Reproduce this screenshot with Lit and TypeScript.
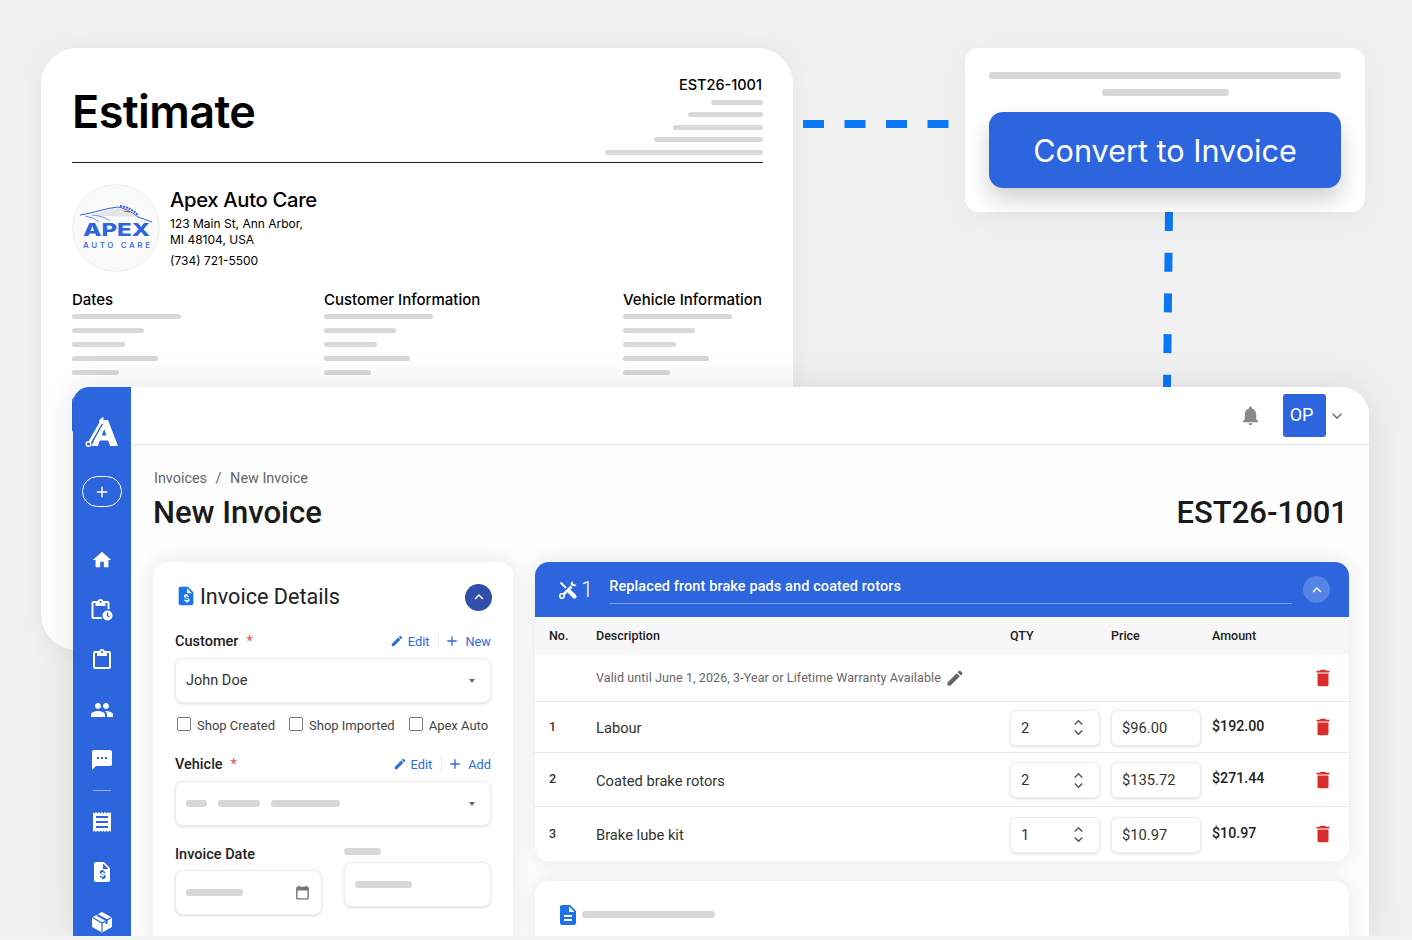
import { LitElement, html, css } from 'lit';
import { customElement } from 'lit/decorators.js';

const icon = (d: string, size = 24, cls = '') => html`
    <svg class=${cls} width=${size} height=${size} viewBox="0 0 24 24" fill="currentColor"><path d=${d}></path></svg>
`;

const ICONS = {
    home: 'M10 20v-6h4v6h5v-8h3L12 3 2 12h3v8z',
    clipboard: 'M19 3h-4.180C14.400 1.840 13.300 1 12 1s-2.400.84-2.820 2H5c-1.100 0-2 .9-2 2v14c0 1.100.9 2 2 2h14c1.100 0 2-.9 2-2V5c0-1.100-.9-2-2-2zm-7 0c.55 0 1 .45 1 1s-.45 1-1 1-1-.45-1-1 .45-1 1-1zm7 16H5V5h2v3h10V5h2v14z',
    people: 'M16 11c1.660 0 2.990-1.340 2.990-3S17.660 5 16 5s-3 1.340-3 3 1.340 3 3 3zm-8 0c1.660 0 2.990-1.340 2.990-3S9.660 5 8 5 5 6.340 5 8s1.340 3 3 3zm0 2c-2.330 0-7 1.170-7 3.500V19h14v-2.500C15 14.170 10.330 13 8 13zm8 0c-.29 0-.62.02-.97.05 1.160.84 1.970 1.970 1.970 3.450V19h6v-2.500c0-2.330-4.670-3.500-7-3.500z',
    chat: 'M20 2H4c-1.100 0-2 .9-2 2v18l4-4h14c1.100 0 2-.9 2-2V4c0-1.100-.9-2-2-2zM9 11H7V9h2v2zm4 0h-2V9h2v2zm4 0h-2V9h2v2z',
    receipt: 'M3 22V2l1.500 1.500L6 2l1.500 1.500L9 2l1.500 1.500L12 2l1.500 1.500L15 2l1.500 1.500L18 2l1.500 1.500L21 2v20l-1.500-1.500L18 22l-1.500-1.500L15 22l-1.500-1.500L12 22l-1.500-1.500L9 22l-1.500-1.500L6 22l-1.500-1.500zM6 8h12V6H6zm0 5h12v-2H6zm0 5h12v-2H6z',
    invoice: 'M14 2H6c-1.100 0-2 .9-2 2v16c0 1.100.9 2 2 2h12c1.100 0 2-.9 2-2V8l-6-6zm-1 7V3.500L18.500 9H13zm-1 10v-1.200c-1.200-.2-2.200-.9-2.400-2.100h1.600c.1.6.6 1 1.600 1 1 0 1.400-.4 1.400-.9 0-.5-.3-.9-1.800-1.200-1.700-.4-2.700-1-2.700-2.300 0-1.100.9-1.900 2.200-2.100V9.900h1.600v1.300c1.200.2 1.900 1.100 2 2.100h-1.600c-.1-.6-.5-1-1.300-1-.9 0-1.300.4-1.300.9 0 .5.4.8 1.800 1.100 1.500.4 2.700 1 2.700 2.400 0 1.100-.9 1.900-2.200 2.100V19z',
    pencil: 'M3 17.250V21h3.750L17.810 9.940l-3.750-3.750L3 17.250zM20.710 7.040a1 1 0 0 0 0-1.410l-2.340-2.340a1 1 0 0 0-1.410 0l-1.830 1.830 3.750 3.750 1.830-1.830z',
    plus: 'M19 13h-6v6h-2v-6H5v-2h6V5h2v6h6v2z',
    chevUp: 'M7.410 15.410 12 10.830l4.590 4.580L18 14l-6-6-6 6z',
    chevDown: 'M7.410 8.590 12 13.170l4.590-4.580L18 10l-6 6-6-6z',
    trash: 'M6 19c0 1.100.9 2 2 2h8c1.100 0 2-.9 2-2V7H6v12zM19 4h-3.500l-1-1h-5l-1 1H5v2h14V4z',
    bell: 'M12 22c1.100 0 2-.9 2-2h-4c0 1.100.9 2 2 2zm6-6v-5c0-3.070-1.630-5.640-4.500-6.320V4c0-.83-.67-1.500-1.500-1.500s-1.500.67-1.500 1.500v.68C7.640 5.360 6 7.920 6 11v5l-2 2v1h16v-1l-2-2z',
    calendar: 'M19 4h-1V2h-2v2H8V2H6v2H5c-1.100 0-2 .9-2 2v14c0 1.100.9 2 2 2h14c1.100 0 2-.9 2-2V6c0-1.100-.9-2-2-2zm0 16H5V9h14v11z',
    doc: 'M14 2H6c-1.100 0-2 .9-2 2v16c0 1.100.9 2 2 2h12c1.100 0 2-.9 2-2V8l-6-6zm2 16H8v-2h8v2zm0-4H8v-2h8v2zm-3-5V3.500L18.500 9H13z'
};

@customElement('app-root')
export class AppRoot extends LitElement {

    static styles = css`
        :host {
            background: #f2f2f2;
            display: block;
            font-family: Roboto, "Liberation Sans", sans-serif;
            height: 940px;
            overflow: hidden;
            width: 1412px;
        }

        .stage {
            background: #f1f1f1;
            height: 936px;
            overflow: hidden;
            position: relative;
        }

        .bar {
            background: #d8d8d8;
            border-radius: 3px;
            display: block;
            height: 5px;
        }

        /* estimate sheet */
        .estimate {
            background: #fff;
            border-radius: 36px;
            box-shadow: 0 0 30px rgba(0, 0, 0, .05);
            box-sizing: border-box;
            color: #000;
            font-family: Inter, "Liberation Sans", sans-serif;
            height: 602px;
            left: 41px;
            padding: 30px 30px 0 31px;
            position: absolute;
            top: 48px;
            width: 752px;
        }

        .est-head {
            align-items: flex-start;
            border-bottom: 1px solid #222;
            display: flex;
            height: 84px;
            justify-content: space-between;
        }

        .est-head h1 {
            font-size: 45px;
            font-weight: 600;
            letter-spacing: -.6px;
            line-height: 1;
            margin: 11px 0 0;
        }

        .est-no {
            align-items: flex-end;
            display: flex;
            flex-direction: column;
            font-size: 14.500px;
            font-weight: 500;
            gap: 7.500px;
        }

        .est-no span:first-child {
            line-height: 14px;
            margin-right: 1px;
        }

        .shop {
            display: flex;
            gap: 10px;
            margin-top: 21px;
        }

        .logo {
            align-items: center;
            background: #fafafa;
            border: 1px solid #eee;
            border-radius: 50%;
            box-sizing: border-box;
            display: flex;
            height: 88px;
            justify-content: center;
            width: 88px;
        }

        .shop h2 {
            font-size: 20.200px;
            font-weight: 500;
            letter-spacing: -.3px;
            line-height: 24px;
            margin: 4px 0 4px;
        }

        .shop p {
            font-size: 12px;
            line-height: 15.500px;
            margin: 0 0 6px;
        }

        .est-cols {
            display: grid;
            grid-template-columns: 252px 299px 1fr;
            margin-top: 16px;
        }

        .est-cols h3 {
            font-size: 15px;
            font-weight: 500;
            line-height: 18px;
            margin: 0 0 5px;
        }

        .lines {
            display: flex;
            flex-direction: column;
            gap: 9px;
        }

        /* dashes between the windows */
        .dash {
            display: block;
            position: absolute;
        }

        /* convert popup */
        .convert {
            background: #fff;
            border-radius: 14px;
            box-shadow: 0 6px 30px rgba(0, 0, 0, .05);
            box-sizing: border-box;
            height: 164px;
            left: 965px;
            padding: 24px;
            position: absolute;
            top: 48px;
            width: 400px;
        }

        .convert .bar {
            height: 7px;
        }

        .convert .short {
            margin: 10px auto 0;
            width: 127px;
        }

        .convert button {
            background: #2d65df;
            border: 0;
            border-radius: 14px;
            box-shadow: 0 12px 22px rgba(0, 0, 0, .18);
            color: #fff;
            display: block;
            font-family: Inter, "Liberation Sans", sans-serif;
            font-size: 30.600px;
            height: 76px;
            margin-top: 16px;
            padding: 0;
            width: 100%;
        }

        /* application window */
        .app {
            background: #fdfdfd;
            border-radius: 16px 28px 0 0;
            box-shadow: 0 0 40px rgba(0, 0, 0, .1);
            display: flex;
            height: 549px;
            left: 73px;
            overflow: hidden;
            position: absolute;
            top: 387px;
            width: 1296px;
        }

        .lobe {
            background: #2d65df;
            border-radius: 4px 0 0 4px;
            height: 36px;
            left: 72px;
            position: absolute;
            top: 397px;
            width: 4px;
        }

        .side {
            align-items: center;
            background: #2d65df;
            color: #fff;
            display: flex;
            flex: 0 0 58px;
            flex-direction: column;
        }

        .side .mark {
            margin-top: 30px;
        }

        .side .add {
            align-items: center;
            border: 1.500px solid #fff;
            border-radius: 16px;
            box-sizing: border-box;
            display: flex;
            height: 31px;
            justify-content: center;
            margin-top: 29px;
            width: 40px;
        }

        .nav {
            align-items: center;
            display: flex;
            flex-direction: column;
            gap: 26px;
            margin-top: 41px;
        }

        .nav svg {
            display: block;
        }

        .nav .home {
            margin: 1px 0;
        }

        .nav hr {
            background: #8fafee;
            border: 0;
            height: 1px;
            margin: -8px 0 -7px;
            width: 18px;
        }

        .main {
            display: flex;
            flex: 1;
            flex-direction: column;
            min-width: 0;
        }

        .top {
            align-items: center;
            background: #fff;
            border-bottom: 1px solid #e4e4ec;
            box-sizing: border-box;
            display: flex;
            flex: 0 0 58px;
            justify-content: flex-end;
            padding-right: 22px;
        }

        .top .bell {
            color: #8a8a8a;
            margin-right: 21px;
        }

        .top .avatar {
            align-items: center;
            background: #2d65df;
            border-radius: 3px;
            box-sizing: border-box;
            color: #fff;
            display: flex;
            font-size: 18px;
            height: 43px;
            justify-content: center;
            padding: 0 6px 2px 0;
            width: 43px;
        }

        .top .caret {
            color: #777;
            margin-left: 1px;
        }

        .content {
            padding: 25px 21px 0 22px;
        }

        .crumbs {
            color: #666;
            font-size: 14.400px;
            line-height: 17px;
            margin-left: 1px;
        }

        .crumbs i {
            font-style: normal;
            margin: 0 5px;
        }

        .title {
            align-items: center;
            color: #1a1a1a;
            display: flex;
            font-size: 31px;
            font-weight: 500;
            justify-content: space-between;
            line-height: 36px;
            margin-top: 8px;
        }

        .columns {
            display: grid;
            gap: 22px;
            grid-template-columns: 360px 814px;
            margin-top: 31px;
        }

        .card {
            background: #fff;
            border-radius: 14px;
            box-shadow: 0 0 22px rgba(0, 0, 0, .09);
        }

        /* invoice details */
        .details {
            box-sizing: border-box;
            height: 420px;
            padding: 21px 22px 0;
        }

        .details-head {
            align-items: center;
            display: flex;
            height: 26px;
        }

        .details-head > svg {
            color: #1a73e8;
        }

        .details-head h2 {
            color: #222;
            flex: 1;
            font-size: 21.600px;
            font-weight: 400;
            margin: 0 0 0 3px;
        }

        .round {
            align-items: center;
            background: #2f4fa8;
            border-radius: 50%;
            color: #fff;
            display: flex;
            height: 27px;
            justify-content: center;
            margin: 2px -1px 0 0;
            width: 27px;
        }

        .label-row {
            align-items: center;
            color: #222;
            display: flex;
            font-size: 14.500px;
            font-weight: 500;
            height: 20px;
        }

        .label-row b {
            color: #ef4b4b;
            font-weight: 400;
            margin-left: 8px;
        }

        .acts {
            align-items: center;
            color: #2d6ae0;
            display: flex;
            font-size: 12.800px;
            font-weight: 400;
            margin-left: auto;
        }

        .acts svg {
            margin-right: 4px;
        }

        .acts svg + span + .sep + svg {
            margin-right: 5px;
        }

        .acts .sep {
            background: #eee;
            height: 16px;
            margin: 0 5px 0 9px;
            width: 1px;
        }

        .field {
            align-items: center;
            background: #fff;
            border: 1px solid #eee;
            border-radius: 8px;
            box-shadow: 0 1px 3px rgba(0, 0, 0, .13);
            box-sizing: border-box;
            color: #333;
            display: flex;
            font-size: 14.500px;
            gap: 11px;
            height: 45px;
            padding: 0 10px;
        }

        .field .arrow {
            border-left: 3.500px solid transparent;
            border-right: 3.500px solid transparent;
            border-top: 4px solid #666;
            margin-left: auto;
            margin-right: 5px;
        }

        .checks {
            color: #444;
            display: flex;
            font-size: 13px;
            height: 20px;
            margin: 12px 0 19px 2px;
        }

        .checks label {
            align-items: center;
            display: flex;
            gap: 6px;
            margin-right: 14px;
        }

        .checks label:last-child {
            margin-right: 0;
        }

        .checks i {
            border: 1.500px solid #777;
            border-radius: 2px;
            box-sizing: border-box;
            height: 14px;
            margin-top: -2px;
            width: 14px;
        }

        .date-row {
            align-items: end;
            display: grid;
            gap: 22px;
            grid-template-columns: 147px 147px;
            margin-top: 18px;
        }

        .date-row .label-row {
            margin-bottom: 6px;
        }

        .date-row .right {
            margin-bottom: 8px;
        }

        .date-row .cap {
            margin-bottom: 7px;
            width: 37px;
        }

        .date-row svg {
            color: #777;
            margin-left: auto;
        }

        /* line items */
        .items {
            overflow: hidden;
        }

        .items-head {
            align-items: center;
            background: #2d65df;
            color: #fff;
            display: flex;
            height: 55px;
            padding: 0 19px 0 23px;
        }

        .items-head .no {
            font-size: 22px;
            font-weight: 300;
            margin: 0 0 0 3px;
        }

        .items-head .name {
            border-bottom: 1px solid #7fa3ee;
            flex: 1;
            font-size: 14.500px;
            font-weight: 500;
            letter-spacing: .1px;
            line-height: 16px;
            margin: 0 11px 0 16px;
            padding: 3px 0 8px;
        }

        .round.light {
            background: #5583e6;
            margin: 0;
        }

        .row {
            align-items: center;
            border-bottom: 1px solid #e8e8e8;
            box-sizing: border-box;
            color: #333;
            display: grid;
            font-size: 14.700px;
            grid-template-columns: 47px 414px 101px 101px 101px 1fr;
            padding-left: 14px;
        }

        .row:last-child {
            border-bottom: 0;
        }

        .row.head {
            background: #f7f7f7;
            border-bottom: 0;
            color: #222;
            font-size: 12.500px;
            font-weight: 500;
            height: 37px;
        }

        .row .num {
            font-size: 12.500px;
            font-weight: 500;
            margin-bottom: 2px;
        }

        .row .desc {
            margin-top: 2px;
        }

        .row .note {
            color: #666;
            font-size: 12.500px;
            letter-spacing: .1px;
            white-space: nowrap;
        }

        .note svg {
            color: #666;
            margin-left: 1px;
            vertical-align: -6px;
        }

        .row .amt {
            color: #222;
            font-size: 14.200px;
            font-weight: 500;
            margin-bottom: 3px;
        }

        .row .del {
            color: #d92d2d;
            display: block;
            margin-left: -1px;
        }

        .box {
            align-items: center;
            background: #fff;
            border: 1px solid #eee;
            border-radius: 6px;
            box-shadow: 0 1px 3px rgba(0, 0, 0, .13);
            box-sizing: border-box;
            display: flex;
            height: 36px;
            justify-content: space-between;
            margin-top: 1px;
            padding: 0 10px;
            width: 90px;
        }

        .spin {
            color: #555;
            display: flex;
            flex-direction: column;
            margin-right: 2px;
        }

        .spin svg {
            display: block;
            margin: -3.500px 0;
        }

        .notes {
            box-sizing: border-box;
            display: flex;
            height: 66px;
            margin-top: 20px;
            padding: 22px 0 0 21px;
        }

        .notes svg {
            color: #1a73e8;
        }

        .notes .bar {
            height: 7px;
            margin: 8px 0 0 2px;
            width: 133px;
        }
    `;

    lines(widths: number[]) {
        return html`<div class="lines">${widths.map(w => html`<span class="bar" style="width:${w}px"></span>`)}</div>`;
    }

    itemRow(no: string, name: string, qty: string, price: string, amount: string, height: number) {
        return html`
            <div class="row" style="height:${height}px">
                <span class="num">${no}</span>
                <span class="desc">${name}</span>
                <div class="box"><span>${qty}</span>
                    <span class="spin">${icon(ICONS.chevUp, 17)}${icon(ICONS.chevDown, 17)}</span>
                </div>
                <div class="box"><span>${price}</span></div>
                <span class="amt">${amount}</span>
                ${icon(ICONS.trash, 22, 'del')}
            </div>
        `;
    }

    renderLogo() {
        return html`
            <svg width="72" height="48" viewBox="0 0 72 48">
                <path d="M14 12 Q26 5 38 4 Q48 6 56 13 L34 12 Z" fill="#e4e4e8"></path>
                <path d="M0 11 C14 9 26 4 38 3 C48 5 54 10 58 13 L72 18" fill="none" stroke="#2d65df" stroke-width="1"></path>
                <path d="M5 12 Q14 13 19 18 M12 11 Q24 12 30 17" fill="none" stroke="#2d65df" stroke-width=".7"></path>
                <path d="M40 2 Q50 3 58 11" fill="none" stroke="#2d65df" stroke-width="2" stroke-dasharray="2 1"></path>
                <path d="M44 7 L50 8" stroke="#d92d2d" stroke-width="1"></path>
                <text x="3" y="32" font-size="18" font-weight="800" fill="#2d65df" font-family="Inter, sans-serif" textLength="67" lengthAdjust="spacingAndGlyphs">APEX</text>
                <text x="3" y="44" font-size="8" font-weight="500" fill="#2d65df" font-family="Inter, sans-serif" textLength="67">AUTO CARE</text>
            </svg>
        `;
    }

    renderTools() {
        return html`
            <svg width="20" height="20" viewBox="0 0 20 20" fill="none" stroke="#fff">
                <path d="M2.500 2.500 8 8" stroke-width="2"></path>
                <path d="M11.500 11.500 16.500 16.500" stroke-width="4" stroke-linecap="round"></path>
                <path d="M13.500 6.500 5.500 14.500" stroke-width="2.500"></path>
                <circle cx="4" cy="16" r="2.200" stroke-width="1.600"></circle>
                <path d="M18.500 5.500a4.500 4.500 0 0 1-6-1.200 4.500 4.500 0 0 1 2-3.300l.7 3 2.300.6z" fill="#fff" stroke="none"></path>
            </svg>
        `;
    }

    renderClockBoard() {
        return html`
            <svg width="24" height="24" viewBox="0 0 24 24">
                <path d=${ICONS.clipboard} fill="#fff" transform="translate(-1.500 0)"></path>
                <circle cx="17.500" cy="17.500" r="6.500" fill="#2d65df"></circle>
                <circle cx="17.500" cy="17.500" r="5" fill="#fff"></circle>
                <path d="M17.500 14.500v3.200l2 1.300" fill="none" stroke="#2d65df" stroke-width="1.300"></path>
            </svg>
        `;
    }

    renderCube() {
        return html`
            <svg width="24" height="24" viewBox="0 0 24 24">
                <path d="M12 2 22 7.500v9.500L12 22.500 2 17V7.500z" fill="#fff"></path>
                <path d="M2.500 7.500 12 13l9.500-5.500M12 13v9" fill="none" stroke="#2d65df" stroke-width="1.200"></path>
                <path d="M7 4.800 16.500 10.200V14" fill="none" stroke="#2d65df" stroke-width="2"></path>
            </svg>
        `;
    }

    renderMark() {
        return html`
            <svg class="mark" width="34" height="30" viewBox="0 0 34 30">
                <path d="M18 3h5l10 26h-8l-1.800-5.500h-8.400L13 29H6.500zM19.200 12l-2.400 6.500h4.600z" fill="#fff" fill-rule="evenodd"></path>
                <path d="M16.500 4.500 4.500 25.500" stroke="#2d65df" stroke-width="5.500"></path>
                <path d="M16.500 4.500 4.500 25.500" stroke="#fff" stroke-width="2.600"></path>
                <path d="M19 .5a4.500 4.500 0 0 0-5 4.500l3.800 2.200 2.700-2.800-2.300-1.400z" fill="#fff"></path>
                <circle cx="3.500" cy="27" r="2.300" fill="#2d65df" stroke="#fff" stroke-width="1.400"></circle>
            </svg>
        `;
    }

    render() {
        return html`
            <div class="stage">
                <section class="estimate">
                    <div class="est-head">
                        <h1>Estimate</h1>
                        <div class="est-no">
                            <span>EST26-1001</span>
                            ${[52, 75, 90, 109, 158].map(w => html`<span class="bar" style="width:${w}px"></span>`)}
                        </div>
                    </div>
                    <div class="shop">
                        <div class="logo">${this.renderLogo()}</div>
                        <div>
                            <h2>Apex Auto Care</h2>
                            <p>123 Main St, Ann Arbor,<br>MI 48104, USA</p>
                            <p>(734) 721-5500</p>
                        </div>
                    </div>
                    <div class="est-cols">
                        <div><h3>Dates</h3>${this.lines([109, 72, 53, 86, 47])}</div>
                        <div><h3>Customer Information</h3>${this.lines([109, 72, 53, 86, 47])}</div>
                        <div><h3>Vehicle Information</h3>${this.lines([109, 72, 53, 86, 47])}</div>
                    </div>
                </section>

                <svg class="dash" style="left:803px;top:120px" width="147" height="9">
                    <line x1="0" y1="4" x2="147" y2="4" stroke="#0a78f5" stroke-width="8" stroke-dasharray="21 20.500"></line>
                </svg>
                <svg class="dash" style="left:1160px;top:212px" width="16" height="176">
                    <line x1="9" y1="0" x2="7" y2="176" stroke="#0a78f5" stroke-width="8" stroke-dasharray="19 21.700"></line>
                </svg>

                <section class="convert">
                    <span class="bar"></span>
                    <span class="bar short"></span>
                    <button>Convert to Invoice</button>
                </section>

                <span class="lobe"></span>
                <section class="app">
                    <aside class="side">
                        ${this.renderMark()}
                        <div class="add">${icon(ICONS.plus, 18)}</div>
                        <div class="nav">
                            ${icon(ICONS.home, 22, 'home')}
                            ${this.renderClockBoard()}
                            ${icon(ICONS.clipboard)}
                            ${icon(ICONS.people)}
                            ${icon(ICONS.chat)}
                            <hr>
                            ${icon(ICONS.receipt)}
                            ${icon(ICONS.invoice)}
                            ${this.renderCube()}
                        </div>
                    </aside>
                    <div class="main">
                        <header class="top">
                            ${icon(ICONS.bell, 23, 'bell')}
                            <div class="avatar">OP</div>
                            ${icon(ICONS.chevDown, 20, 'caret')}
                        </header>
                        <div class="content">
                            <div class="crumbs">Invoices <i>/</i> New Invoice</div>
                            <div class="title"><span>New Invoice</span><span>EST26-1001</span></div>
                            <div class="columns">
                                <div class="card details">
                                    <div class="details-head">
                                        ${icon(ICONS.invoice, 22)}
                                        <h2>Invoice Details</h2>
                                        <div class="round">${icon(ICONS.chevUp, 18)}</div>
                                    </div>
                                    <div class="label-row" style="margin:22px 0 7px">
                                        Customer <b>*</b>
                                        <div class="acts">
                                            ${icon(ICONS.pencil, 14)}<span>Edit</span>
                                            <i class="sep"></i>
                                            ${icon(ICONS.plus, 16)}<span>New</span>
                                        </div>
                                    </div>
                                    <div class="field">John Doe<i class="arrow"></i></div>
                                    <div class="checks">
                                        <label><i></i>Shop Created</label>
                                        <label><i></i>Shop Imported</label>
                                        <label><i></i>Apex Auto</label>
                                    </div>
                                    <div class="label-row" style="margin-bottom:7px">
                                        Vehicle <b>*</b>
                                        <div class="acts">
                                            ${icon(ICONS.pencil, 14)}<span>Edit</span>
                                            <i class="sep"></i>
                                            ${icon(ICONS.plus, 16)}<span>Add</span>
                                        </div>
                                    </div>
                                    <div class="field">
                                        <span class="bar" style="width:21px;height:7px"></span>
                                        <span class="bar" style="width:42px;height:7px"></span>
                                        <span class="bar" style="width:69px;height:7px"></span>
                                        <i class="arrow"></i>
                                    </div>
                                    <div class="date-row">
                                        <div>
                                            <div class="label-row">Invoice Date</div>
                                            <div class="field">
                                                <span class="bar" style="width:57px;height:7px"></span>
                                                ${icon(ICONS.calendar, 17)}
                                            </div>
                                        </div>
                                        <div class="right">
                                            <span class="bar cap" style="height:7px"></span>
                                            <div class="field">
                                                <span class="bar" style="width:57px;height:7px"></span>
                                            </div>
                                        </div>
                                    </div>
                                </div>
                                <div>
                                    <div class="card items">
                                        <div class="items-head">
                                            ${this.renderTools()}
                                            <span class="no">1</span>
                                            <span class="name">Replaced front brake pads and coated rotors</span>
                                            <div class="round light">${icon(ICONS.chevUp, 18)}</div>
                                        </div>
                                        <div class="row head">
                                            <span>No.</span><span>Description</span><span>QTY</span><span>Price</span><span>Amount</span>
                                        </div>
                                        <div class="row" style="height:48px">
                                            <span></span>
                                            <span class="note">Valid until June 1, 2026, 3-Year or Lifetime Warranty Available ${icon(ICONS.pencil, 20)}</span>
                                            <span></span><span></span><span></span>
                                            ${icon(ICONS.trash, 22, 'del')}
                                        </div>
                                        ${this.itemRow('1', 'Labour', '2', '$96.00', '$192.00', 51)}
                                        ${this.itemRow('2', 'Coated brake rotors', '2', '$135.72', '$271.44', 54)}
                                        ${this.itemRow('3', 'Brake lube kit', '1', '$10.97', '$10.97', 54)}
                                    </div>
                                    <div class="card notes">
                                        ${icon(ICONS.doc, 24)}
                                        <span class="bar"></span>
                                    </div>
                                </div>
                            </div>
                        </div>
                    </div>
                </section>
            </div>
        `;
    }
}
